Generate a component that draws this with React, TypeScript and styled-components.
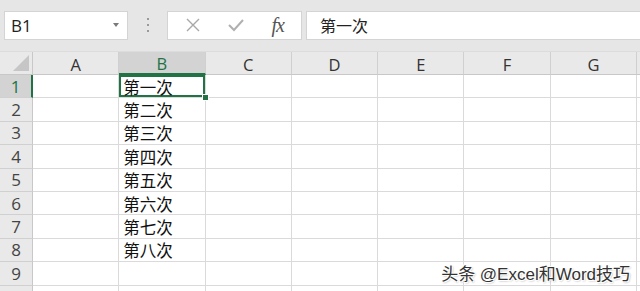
import React from "react";
import styled, { createGlobalStyle } from "styled-components";

const GlobalStyle = createGlobalStyle`
  html, body {
    margin: 0;
    padding: 0;
    background: #ffffff;
  }
`;

const COL_W = 86.3;
const ROW_H = 23.4;
// last column / last row only peek in at the window edge, so they carry no label
const columns = ["A", "B", "C", "D", "E", "F", "G", ""];
const values = ["第一次", "第二次", "第三次", "第四次", "第五次", "第六次", "第七次", "第八次", "", ""];

const Page = styled.div`
  position: relative;
  width: 640px;
  height: 291px;
  overflow: hidden;
  font-family: "Open Sans", "Liberation Sans", "Noto Sans CJK SC", sans-serif;
`;

const Toolbar = styled.div`
  display: flex;
  align-items: center;
  height: 52px;
  padding: 0 0 1px 4px;
  box-sizing: border-box;
  background: #e6e6e6;
  border-bottom: 1px solid #dcdcdc;
`;

const NameBox = styled.div`
  display: flex;
  align-items: center;
  justify-content: space-between;
  width: 124px;
  height: 29px;
  padding: 0 8px 0 6px;
  box-sizing: border-box;
  background: #ffffff;
  border: 1px solid #d4d4d4;
  font-size: 17px;
  color: #222;
`;

const Caret = styled.span`
  width: 0;
  height: 0;
  border-left: 3.5px solid transparent;
  border-right: 3.5px solid transparent;
  border-top: 4px solid #7a7a7a;
`;

const Grip = styled.div`
  display: flex;
  flex-direction: column;
  align-items: center;
  gap: 4px;
  width: 39px;
  div {
    width: 2px;
    height: 2px;
    background: #9a9a9a;
  }
`;

const ButtonsBox = styled.div`
  display: flex;
  align-items: center;
  justify-content: space-around;
  width: 135px;
  height: 29px;
  box-sizing: border-box;
  background: #ffffff;
  border: 1px solid #d4d4d4;
  padding: 0 4px;
`;

const Fx = styled.span`
  font-family: "Liberation Serif", serif;
  font-style: italic;
  font-size: 20px;
  color: #555;
  letter-spacing: -1px;
`;

const FormulaInput = styled.div`
  flex: 1;
  display: flex;
  align-items: center;
  height: 29px;
  margin-left: 4px;
  padding-left: 13px;
  box-sizing: border-box;
  background: #ffffff;
  border: 1px solid #d4d4d4;
  border-right: none;
  font-family: "Noto Sans CJK SC", sans-serif;
  font-size: 16px;
  color: #222;
`;

const Sheet = styled.div`
  display: grid;
  grid-template-columns: 33px repeat(${columns.length}, ${COL_W}px);
  grid-template-rows: 23px repeat(${values.length}, ${ROW_H}px);
`;

const Corner = styled.div`
  position: relative;
  background: #e9e9e9;
  border-right: 1px solid #c8c8c8;
  border-bottom: 1px solid #c8c8c8;
  box-sizing: border-box;
  &::after {
    content: "";
    position: absolute;
    right: 3px;
    bottom: 3px;
    width: 0;
    height: 0;
    border-left: 16px solid transparent;
    border-bottom: 16px solid #c6c6c6;
  }
`;

const ColHeader = styled.div<{ $active?: boolean }>`
  display: flex;
  align-items: center;
  justify-content: center;
  box-sizing: border-box;
  background: ${(p) => (p.$active ? "#d3d3d3" : "#e9e9e9")};
  border-right: 1px solid #d0d0d0;
  border-bottom: ${(p) => (p.$active ? "2px solid #217346" : "1px solid #c8c8c8")};
  color: ${(p) => (p.$active ? "#217346" : "#333")};
  font-size: 16.5px;
  padding-top: 2px;
`;

const RowHeader = styled.div<{ $active?: boolean }>`
  display: flex;
  align-items: center;
  justify-content: center;
  box-sizing: border-box;
  background: ${(p) => (p.$active ? "#d3d3d3" : "#e9e9e9")};
  border-right: ${(p) => (p.$active ? "2px solid #217346" : "1px solid #c8c8c8")};
  border-bottom: 1px solid #d0d0d0;
  color: ${(p) => (p.$active ? "#217346" : "#444")};
  font-size: 17px;
`;

const Cell = styled.div<{ $selected?: boolean }>`
  position: relative;
  display: flex;
  align-items: center;
  padding: 1px 0 0 4px;
  box-sizing: border-box;
  border-right: 1px solid #dadada;
  border-bottom: 1px solid #dadada;
  font-family: "Noto Sans CJK SC", sans-serif;
  font-size: 16.5px;
  color: #111;
  ${(p) =>
    p.$selected &&
    `
    box-shadow: inset 0 0 0 2px #217346;
    &::after {
      content: "";
      position: absolute;
      right: -4px;
      bottom: -4px;
      width: 5px;
      height: 5px;
      background: #217346;
      border: 1px solid #ffffff;
      z-index: 2;
    }
  `}
`;

const Watermark = styled.div`
  position: absolute;
  right: 10px;
  bottom: 6px;
  font-family: "Liberation Sans", "Noto Sans CJK SC", sans-serif;
  font-size: 17px;
  color: #333;
  text-shadow: 1px 1px 0 #fff, -1px -1px 0 #fff, 1px -1px 0 #fff, -1px 1px 0 #fff, 1px 1px 2px #888;
`;

export default function App() {
  return (
    <>
      <GlobalStyle />
      <Page>
        <Toolbar>
          <NameBox>
            B1
            <Caret />
          </NameBox>
          <Grip>
            <div />
            <div />
            <div />
          </Grip>
          <ButtonsBox>
            <svg width="16" height="16" viewBox="0 0 16 16">
              <path d="M2 2 L14 14 M14 2 L2 14" stroke="#a8a8a8" strokeWidth="1.4" fill="none" />
            </svg>
            <svg width="18" height="16" viewBox="0 0 18 16">
              <path d="M2 8 L7 13 L16 3" stroke="#b0b0b0" strokeWidth="2" fill="none" />
            </svg>
            <Fx>fx</Fx>
          </ButtonsBox>
          <FormulaInput>第一次</FormulaInput>
        </Toolbar>
        <Sheet>
          <Corner />
          {columns.map((c, ci) => (
            <ColHeader key={ci} $active={c === "B"}>
              {c}
            </ColHeader>
          ))}
          {values.map((v, i) => (
            <React.Fragment key={i}>
              <RowHeader $active={i === 0}>{i < 9 ? i + 1 : ""}</RowHeader>
              {columns.map((c, ci) => (
                <Cell key={ci} $selected={i === 0 && c === "B"}>
                  {c === "B" ? v : ""}
                </Cell>
              ))}
            </React.Fragment>
          ))}
        </Sheet>
        <Watermark>头条 @Excel和Word技巧</Watermark>
      </Page>
    </>
  );
}
